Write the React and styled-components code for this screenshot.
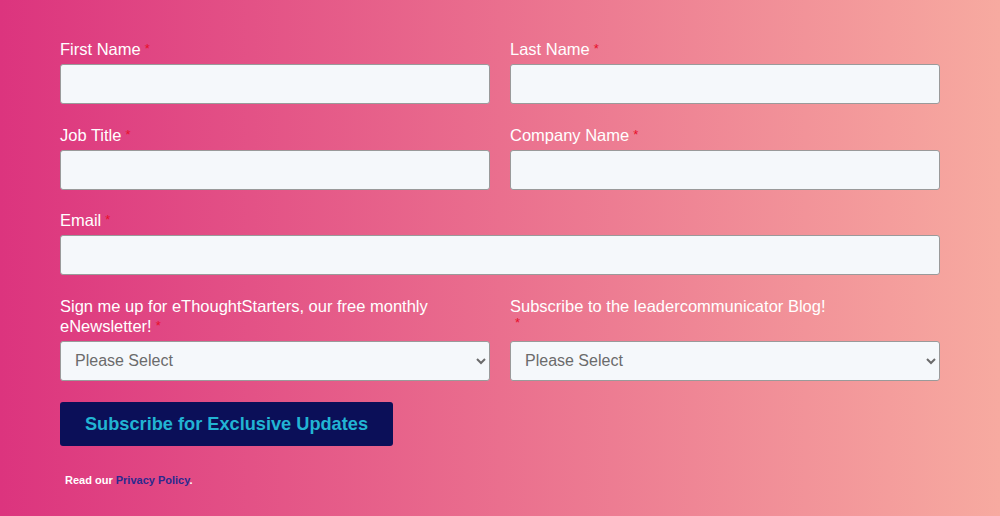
import React from "react";
import styled, { createGlobalStyle } from "styled-components";

const GlobalStyle = createGlobalStyle`
  html, body {
    margin: 0;
    padding: 0;
  }
  body {
    font-family: "Liberation Sans", Arial, sans-serif;
  }
`;

const Page = styled.div`
  width: 1000px;
  height: 516px;
  box-sizing: border-box;
  padding: 39px 60px 0 60px;
  background: linear-gradient(90deg, #dc347e 0%, #ea6f8e 50%, #f7aaa0 100%);
`;

const Form = styled.form`
  display: grid;
  grid-template-columns: 430px 430px;
  column-gap: 20px;
  row-gap: 20.5px;
`;

const Field = styled.div`
  grid-column: ${(props) => (props.wide ? "1 / 3" : "auto")};
  display: flex;
  flex-direction: column;
`;

const Label = styled.label`
  color: #ffffff;
  font-size: 16.5px;
  line-height: 20px;
  margin-bottom: 5px;
`;

const Req = styled.span`
  color: #e8102a;
  font-size: 13px;
  vertical-align: top;
  margin-left: 4px;
  display: ${(props) => (props.block ? "block" : "inline")};
  padding-left: ${(props) => (props.block ? "1px" : "0")};
  line-height: ${(props) => (props.block ? "14px" : "inherit")};
  height: ${(props) => (props.block ? "20px" : "auto")};
`;

const Input = styled.input`
  box-sizing: border-box;
  height: 40px;
  width: 100%;
  background: #f5f8fb;
  border: 1px solid #9a9a9a;
  border-radius: 3px;
  padding: 0 15px;
  font-family: "Liberation Sans", Arial, sans-serif;
  font-size: 16px;
`;

const Select = styled.select`
  box-sizing: border-box;
  height: 40px;
  width: 100%;
  background-color: #f5f8fb;
  border: 1px solid #9a9a9a;
  border-radius: 3px;
  padding: 0 10px;
  color: #6b6b6b;
  font-family: "Liberation Sans", Arial, sans-serif;
  font-size: 16px;
`;

const Actions = styled.div`
  margin-top: 21.5px;
`;

const SubmitButton = styled.button`
  height: 44px;
  width: 333px;
  background: #0b0f58;
  color: #22b4d3;
  border: none;
  border-radius: 3px;
  font-family: "Liberation Sans", Arial, sans-serif;
  font-weight: bold;
  font-size: 18.2px;
  cursor: pointer;
`;

const Legal = styled.p`
  margin: 27.5px 0 0 5px;
  color: #ffffff;
  font-size: 11px;
  font-weight: bold;

  & > a {
    color: #2b2a8e;
    text-decoration: none;
  }
`;

const TextField = ({ label, wide }) => (
  <Field wide={wide}>
    <Label>
      {label}
      <Req>*</Req>
    </Label>
    <Input type="text" />
  </Field>
);

export default function App() {
  return (
    <>
      <GlobalStyle />
      <Page>
        <Form>
          <TextField label="First Name" />
          <TextField label="Last Name" />
          <TextField label="Job Title" />
          <TextField label="Company Name" />
          <TextField label="Email" wide />
          <Field>
            <Label>
              Sign me up for eThoughtStarters, our free monthly eNewsletter!
              <Req>*</Req>
            </Label>
            <Select defaultValue="">
              <option value="">Please Select</option>
              <option value="yes">Yes</option>
              <option value="no">No</option>
            </Select>
          </Field>
          <Field>
            <Label>
              Subscribe to the leadercommunicator Blog!
              <Req block>*</Req>
            </Label>
            <Select defaultValue="">
              <option value="">Please Select</option>
              <option value="yes">Yes</option>
              <option value="no">No</option>
            </Select>
          </Field>
        </Form>
        <Actions>
          <SubmitButton type="button">Subscribe for Exclusive Updates</SubmitButton>
        </Actions>
        <Legal>
          Read our <a href="#privacy">Privacy Policy</a>.
        </Legal>
      </Page>
    </>
  );
}
